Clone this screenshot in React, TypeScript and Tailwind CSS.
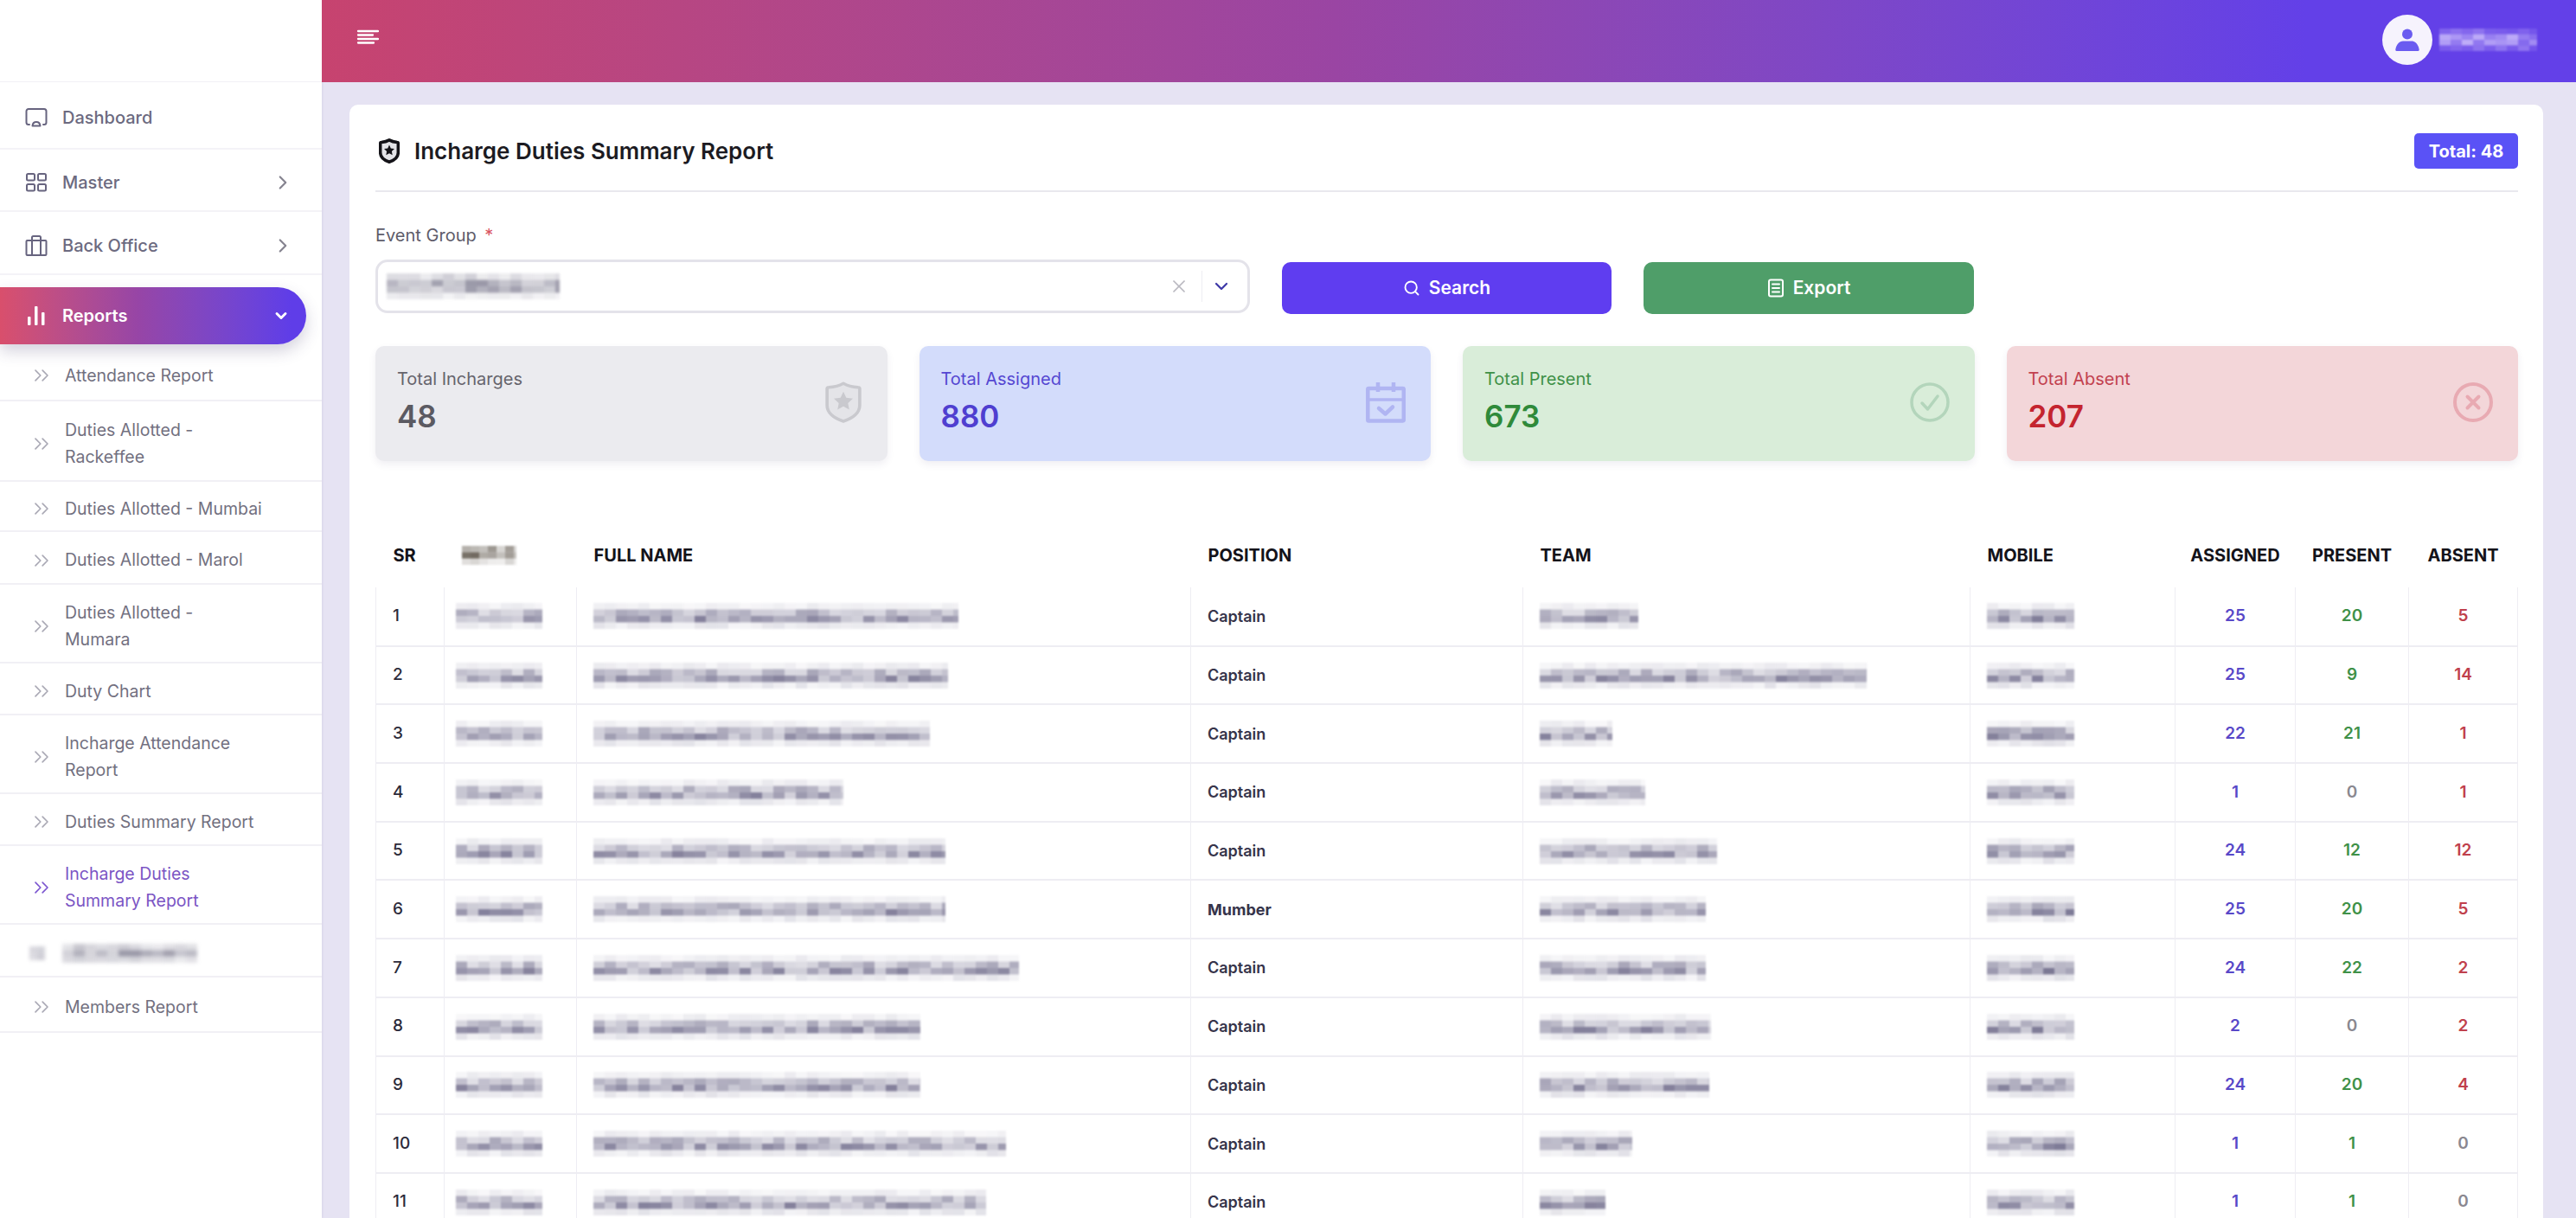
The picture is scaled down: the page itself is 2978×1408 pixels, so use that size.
import React from "react";
import { ChevronRight, ChevronDown, ChevronsRight, Search, X } from "lucide-react";

function hash(seed: number, i: number, j: number) {
  const v = Math.sin(seed * 12.9898 + i * 78.233 + j * 37.719) * 43758.5453;
  return v - Math.floor(v);
}

function Mosaic({ w, seed, color = "#5f5a80", h = 30, cw = 13, levels = [0.1, 0.42, 0.6, 0.14] }: { w: number; seed: number; color?: string; h?: number; cw?: number; levels?: number[] }) {
  const n = Math.ceil(w / cw);
  const rh = h / levels.length;
  const rects: React.ReactNode[] = [];
  levels.forEach((level, j) => {
    for (let i = 0; i < n; i++) {
      const o = level * (0.5 + 0.9 * hash(seed, i, j));
      rects.push(<rect key={j + "-" + i} x={i * cw} y={j * rh} width={cw} height={rh} fill={color} opacity={o} />);
    }
  });
  return (
    <svg width={w} height={h} viewBox={`0 0 ${w} ${h}`} className="block shrink-0" aria-hidden="true">
      {rects}
    </svg>
  );
}

function DashIcon() {
  return (
    <svg width="26" height="24" viewBox="0 0 26 24" fill="none" stroke="#67647f" strokeWidth="2" strokeLinecap="round" strokeLinejoin="round">
      <path d="M5 20H4a2.500 2.500 0 0 1-2.500-2.500V4.500A2.500 2.500 0 0 1 4 2h18a2.500 2.500 0 0 1 2.500 2.500v13A2.500 2.500 0 0 1 22 20h-1" />
      <path d="M8.500 21.500c.3-3 2-4.500 4.500-4.500s4.200 1.500 4.500 4.500z" />
    </svg>
  );
}

function GridIcon() {
  return (
    <svg width="26" height="24" viewBox="0 0 26 24" fill="none" stroke="#67647f" strokeWidth="2">
      <rect x="2" y="2" width="9" height="7.500" rx="1.500" />
      <rect x="15" y="2" width="9" height="7.500" rx="1.500" />
      <rect x="2" y="14" width="9" height="7.500" rx="1.500" />
      <rect x="15" y="14" width="9" height="7.500" rx="1.500" />
    </svg>
  );
}

function CaseIcon() {
  return (
    <svg width="26" height="26" viewBox="0 0 26 26" fill="none" stroke="#67647f" strokeWidth="2" strokeLinejoin="round">
      <rect x="1.500" y="7" width="23" height="17" rx="1" />
      <path d="M8 24V3.500A1.500 1.500 0 0 1 9.500 2h7A1.500 1.500 0 0 1 18 3.500V24" />
    </svg>
  );
}

function BarsIcon() {
  return (
    <svg width="22" height="24" viewBox="0 0 22 24" fill="#ffffff">
      <rect x="1" y="13" width="3.500" height="10" rx="1" />
      <rect x="9" y="1" width="3.500" height="22" rx="1" />
      <rect x="17" y="8" width="3.500" height="15" rx="1" />
    </svg>
  );
}

function ShieldStar({ w, h, color, inner, sw }: { w: number; h: number; color: string; inner: string; sw: number }) {
  return (
    <svg width={w} height={h} viewBox="0 0 24 28" fill="none" preserveAspectRatio="none">
      <path d="M12 1.800c2.600 1.500 5.800 2.300 9.200 2.500.7 0 1.100.5 1.100 1.100V16c0 4.600-4 8.300-10.300 10.300C5.700 24.300 1.700 20.600 1.700 16V5.400c0-.6.400-1.100 1.100-1.100 3.400-.2 6.600-1 9.200-2.500z" stroke={color} strokeWidth={sw} strokeLinejoin="round" fill={inner} />
      <path d="m12 7.200 1.800 3.900 4.200.5-3.100 2.900.8 4.200-3.700-2.100-3.700 2.100.8-4.200L6 11.600l4.200-.5z" fill={color} />
    </svg>
  );
}

function CalCheck({ color }: { color: string }) {
  return (
    <svg width="46" height="47" viewBox="0 0 46 47" fill="none" stroke={color} strokeWidth="4.500" strokeLinejoin="round">
      <rect x="2.300" y="7" width="41.500" height="37.500" rx="1" />
      <path d="M14 0v11M32 0v11" />
      <path d="M2 20h42" strokeWidth="3.500" />
      <path d="m15 30 7.500 6.500L31 28.500" strokeLinecap="round" />
    </svg>
  );
}

function CheckCircle({ color }: { color: string }) {
  return (
    <svg width="46" height="46" viewBox="0 0 46 46" fill="none" stroke={color} strokeWidth="3.500" strokeLinecap="round" strokeLinejoin="round">
      <circle cx="23" cy="23" r="21" />
      <path d="m14 24 6.500 7L32 16" />
    </svg>
  );
}

function XCircle({ color }: { color: string }) {
  return (
    <svg width="46" height="46" viewBox="0 0 46 46" fill="none" stroke={color} strokeWidth="4" strokeLinecap="round">
      <circle cx="23" cy="23" r="21" />
      <path d="m16.500 16.500 13 13M29.500 16.500l-13 13" />
    </svg>
  );
}

function FileIcon() {
  return (
    <svg width="20" height="22" viewBox="0 0 20 22" fill="none" stroke="#ffffff" strokeWidth="2" strokeLinecap="round">
      <rect x="2" y="1.500" width="16" height="19" rx="2" />
      <path d="M6 6.500h8M6 11h8M6 15.500h8" />
    </svg>
  );
}

function UserIcon() {
  return (
    <svg width="28" height="28" viewBox="0 0 28 28" fill="#6a5bf0">
      <circle cx="14" cy="7.500" r="6" />
      <path d="M1.500 27c-.8 0-1.300-.6-1.200-1.400C1 19.500 5 15.500 9 15.500h10c4 0 8 4 8.700 10.100.1.800-.4 1.400-1.200 1.400z" />
    </svg>
  );
}

function Burger() {
  return (
    <svg width="26" height="20" viewBox="0 0 26 20" fill="none" stroke="#ffffff" strokeWidth="2.300" strokeLinecap="round" className="-mt-[5px]">
      <path d="M2 3h23M2 7.500h17M2 12h23M2 16.500h18" />
    </svg>
  );
}

const topNav = [
  { label: "Dashboard", icon: <DashIcon />, h: "h-[78px]", arrow: false },
  { label: "Master", icon: <GridIcon />, h: "h-[72px]", arrow: true },
  { label: "Back Office", icon: <CaseIcon />, h: "h-[73px]", arrow: true },
];

const subNav = [
  { lines: ["Attendance Report"], h: "h-[64px]" },
  { lines: ["Duties Allotted -", "Rackeffee"], h: "h-[93px]" },
  { lines: ["Duties Allotted - Mumbai"], h: "h-[58px]" },
  { lines: ["Duties Allotted - Marol"], h: "h-[61px]" },
  { lines: ["Duties Allotted -", "Mumara"], h: "h-[91px]" },
  { lines: ["Duty Chart"], h: "h-[60px]" },
  { lines: ["Incharge Attendance", "Report"], h: "h-[91px]" },
  { lines: ["Duties Summary Report"], h: "h-[60px]" },
  { lines: ["Incharge Duties", "Summary Report"], h: "h-[91px]", active: true },
  { lines: [], h: "h-[61px]", hidden: true },
  { lines: ["Members Report"], h: "h-[64px]" },
];

const rows = [
  ["25", "20", "5", "Captain", 422, 114],
  ["25", "9", "14", "Captain", 410, 378],
  ["22", "21", "1", "Captain", 389, 84],
  ["1", "0", "1", "Captain", 289, 122],
  ["24", "12", "12", "Captain", 407, 205],
  ["25", "20", "5", "Mumber", 407, 192],
  ["24", "22", "2", "Captain", 492, 192],
  ["2", "0", "2", "Captain", 378, 198],
  ["24", "20", "4", "Captain", 378, 196],
  ["1", "1", "0", "Captain", 477, 107],
  ["1", "1", "0", "Captain", 454, 76],
] as const;

function tone(v: string, cls: string) {
  return v === "0" ? "text-[#8a8890]" : cls;
}

const cards = [
  { title: "Total Incharges", value: "48", bg: "bg-[#ebebef]", t: "text-[#66646c]", n: "text-[#5b5a62]", icon: <ShieldStar w={44} h={50} color="#c9c9ce" inner="#e4e4e8" sw={2} /> },
  { title: "Total Assigned", value: "880", bg: "bg-[#d3dcfb]", t: "text-[#5547d2]", n: "text-[#4f3fd0]", icon: <CalCheck color="#b0b5f2" /> },
  { title: "Total Present", value: "673", bg: "bg-[#d9edd9]", t: "text-[#3f9148]", n: "text-[#2f8a3a]", icon: <CheckCircle color="#b3d5bb" /> },
  { title: "Total Absent", value: "207", bg: "bg-[#f3d6d9]", t: "text-[#c2414f]", n: "text-[#c4242f]", icon: <XCircle color="#e8aab2" /> },
];

const headers = ["SR", "", "FULL NAME", "POSITION", "TEAM", "MOBILE", "ASSIGNED", "PRESENT", "ABSENT"];

export default function App() {
  return (
    <div className="flex h-screen w-full overflow-hidden bg-[#e6e3f3] font-['Inter','Liberation_Sans',sans-serif]">
      <aside className="flex w-[372px] shrink-0 flex-col bg-white shadow-[1px_0_2px_rgba(60,50,120,0.08)]">
        <div className="h-[95px] shrink-0 border-b border-[#f1f0f5]" />
        {topNav.map((n) => (
          <div key={n.label} className={`flex ${n.h} shrink-0 items-center border-b-2 border-[#f4f3f7] pl-[29px] pr-[32px] pt-[6px]`}>
            <span className="flex w-[26px] justify-center">{n.icon}</span>
            <span className="ml-[17px] flex-1 text-[20px] font-medium text-[#6c6a80]">{n.label}</span>
            {n.arrow && <ChevronRight size={26} strokeWidth={2} className="text-[#85838f]" />}
          </div>
        ))}
        <div className="mt-[14px] flex h-[66px] w-[354px] shrink-0 items-center rounded-r-full bg-gradient-to-r from-[#d94f6c] via-[#9745a6] via-45% to-[#5f3de8] to-95% pl-[31px] pr-[19px] shadow-[0_8px_18px_rgba(60,50,100,0.22)]">
          <BarsIcon />
          <span className="ml-[19px] flex-1 text-[20px] font-semibold text-white">Reports</span>
          <ChevronDown size={20} strokeWidth={3.500} className="text-white" />
        </div>
        <div className="h-[2px] shrink-0" />
        {subNav.map((s, i) => (
          <div key={i} className={`flex ${s.h} shrink-0 items-center border-b-2 border-[#f1f0f5] pl-[34px] pr-[20px] pt-[6px]`}>
            {s.hidden ? (
              <div className="flex items-center blur-[2px]">
                <Mosaic w={18} seed={77} h={16} cw={9} levels={[0.3, 0.3]} color="#8a889c" />
                <span className="w-[20px]" />
                <Mosaic w={156} seed={78} h={22} levels={[0.3, 0.6, 0.25]} color="#7a788c" />
              </div>
            ) : (
              <>
                <ChevronsRight size={28} strokeWidth={1.400} className={s.active ? "text-[#7b55cf]" : "text-[#a9a8b4]"} />
                <div className={`ml-[13px] text-[19.500px] leading-[31px] ${s.active ? "text-[#7b55c4]" : "text-[#72707f]"}`}>
                  {s.lines.map((l) => (
                    <div key={l}>{l}</div>
                  ))}
                </div>
              </>
            )}
          </div>
        ))}
      </aside>

      <div className="flex min-w-0 flex-1 flex-col">
        <header className="flex h-[95px] shrink-0 items-center bg-gradient-to-r from-[#c7436f] via-[#9a45a3] via-45% to-[#6340e8] to-88% pb-[4px] pl-[40px] pr-[45px]">
          <Burger />
          <div className="ml-auto flex items-center">
            <div className="flex h-[58px] w-[58px] items-center justify-center rounded-full bg-[#f6f3fd]">
              <UserIcon />
            </div>
            <div className="ml-[8px] blur-[1px]">
              <Mosaic w={113} seed={5} h={26} levels={[0.25, 0.5, 0.5, 0.25]} color="#e6dcff" />
            </div>
          </div>
        </header>

        <main className="min-h-0 flex-1 pl-[32px] pr-[38px] pt-[26px]">
          <div className="h-[1400px] rounded-t-[10px] bg-white pl-[30px] pr-[29px] pt-[33px]">
            <div className="flex h-[68px] items-start border-b-2 border-[#e9e8ee]">
              <div className="flex h-[41px] flex-1 items-center pl-[4px]">
                <ShieldStar w={24} h={29} color="#141318" inner="#e4e4e8" sw={3.500} />
                <h1 className="ml-[17px] text-[26px] font-semibold text-[#1c1b22]">Incharge Duties Summary Report</h1>
              </div>
              <span className="flex h-[41px] w-[120px] items-center justify-center rounded-[5px] bg-[#5a52f6] text-[20px] font-bold text-white">Total: 48</span>
            </div>

            <div className="mt-[36px] text-[20px] leading-[28px] text-[#5e5c6a]">
              Event Group <span className="ml-1 text-[#d9535f]">*</span>
            </div>
            <div className="mt-[14px] flex items-start">
              <div className="flex h-[62px] w-[1011px] items-center rounded-[14px] border-[3px] border-[#e4e3ea] pl-[10px] pr-[18px]">
                <div className="blur-[1.500px]">
                  <Mosaic w={200} seed={9} h={30} levels={[0.25, 0.6, 0.55, 0.15]} color="#77758a" />
                </div>
                <X size={24} strokeWidth={1.750} className="ml-auto text-[#b9b8c0]" />
                <span className="ml-[14px] mr-[10px] h-[36px] w-px bg-[#eeedf2]" />
                <ChevronDown size={24} strokeWidth={2.250} className="text-[#3f3aa8]" />
              </div>
              <button className="ml-[37px] mt-[3px] flex h-[60px] w-[381px] items-center justify-center gap-[10px] rounded-[10px] bg-[#5f3df0] text-[21px] font-semibold text-white">
                <Search size={20} strokeWidth={2.250} />
                Search
              </button>
              <button className="ml-[37px] mt-[3px] flex h-[60px] w-[382px] items-center justify-center gap-[10px] rounded-[10px] bg-[#4f9e69] text-[21px] font-semibold text-white">
                <FileIcon />
                Export
              </button>
            </div>

            <div className="mt-[37px] grid grid-cols-4 gap-[37px]">
              {cards.map((c) => (
                <div key={c.title} className={`flex h-[133px] items-center justify-between rounded-[10px] ${c.bg} pb-[3px] pl-[25px] pr-[29px] shadow-[0_4px_8px_rgba(60,50,100,0.08)]`}>
                  <div>
                    <div className={`text-[20px] leading-[28px] ${c.t}`}>{c.title}</div>
                    <div className={`mt-[4px] text-[35px] font-semibold leading-[50px] ${c.n}`}>{c.value}</div>
                  </div>
                  {c.icon}
                </div>
              ))}
            </div>

            <table className="mt-[68px] w-[2476px] table-fixed border-collapse">
              <colgroup>
                <col className="w-[79px]" />
                <col className="w-[153px]" />
                <col className="w-[710px]" />
                <col className="w-[384px]" />
                <col className="w-[517px]" />
                <col className="w-[237px]" />
                <col className="w-[139px]" />
                <col className="w-[131px]" />
                <col className="w-[126px]" />
              </colgroup>
              <thead>
                <tr className="h-[78px]">
                  {headers.map((h, i) => (
                    <th key={i} className={`pt-[3px] text-[20px] font-bold text-[#14131a] ${i >= 6 ? "text-center" : "pl-[20px] text-left"}`}>
                      {i === 1 ? (
                        <div className="blur-[1px]">
                          <Mosaic w={63} seed={3} h={22} cw={10} levels={[0.5, 0.7, 0.2]} color="#6a6258" />
                        </div>
                      ) : (
                        h
                      )}
                    </th>
                  ))}
                </tr>
              </thead>
              <tbody>
                {rows.map((r, i) => (
                  <tr key={i} className="h-[67.700px]">
                    <td className="border-x border-b-2 border-[#eeedf3] pl-[19px] text-[19px] font-medium text-[#2c2a3a]">{i + 1}</td>
                    <td className="border-x border-b-2 border-[#eeedf3] pl-[13px]">
                      <div className="blur-[1.200px]">
                        <Mosaic w={100} seed={i + 20} color="#6c6888" />
                      </div>
                    </td>
                    <td className="border-x border-b-2 border-[#eeedf3] pl-[19px]">
                      <div className="blur-[1.200px]">
                        <Mosaic w={r[4]} seed={i + 40} color="#6c6888" />
                      </div>
                    </td>
                    <td className={`border-x border-b-2 border-[#eeedf3] pl-[19px] text-[18px] ${r[3] === "Mumber" ? "font-bold" : "font-semibold"} text-[#36344a]`}>{r[3]}</td>
                    <td className="border-x border-b-2 border-[#eeedf3] pl-[19px]">
                      <div className="blur-[1.200px]">
                        <Mosaic w={r[5]} seed={i + 60} color="#6c6888" />
                      </div>
                    </td>
                    <td className="border-x border-b-2 border-[#eeedf3] pl-[19px]">
                      <div className="blur-[1.200px]">
                        <Mosaic w={101} seed={i + 80} color="#625e80" />
                      </div>
                    </td>
                    <td className="border-x border-b-2 border-[#eeedf3] text-center text-[19px] font-semibold text-[#5848c8]">{r[0]}</td>
                    <td className={`border-x border-b-2 border-[#eeedf3] text-center text-[19px] font-semibold ${tone(r[1], "text-[#3f9148]")}`}>{r[1]}</td>
                    <td className={`border-x border-b-2 border-[#eeedf3] text-center text-[19px] font-semibold ${tone(r[2], "text-[#c0404c]")}`}>{r[2]}</td>
                  </tr>
                ))}
              </tbody>
            </table>
          </div>
        </main>
      </div>
    </div>
  );
}
